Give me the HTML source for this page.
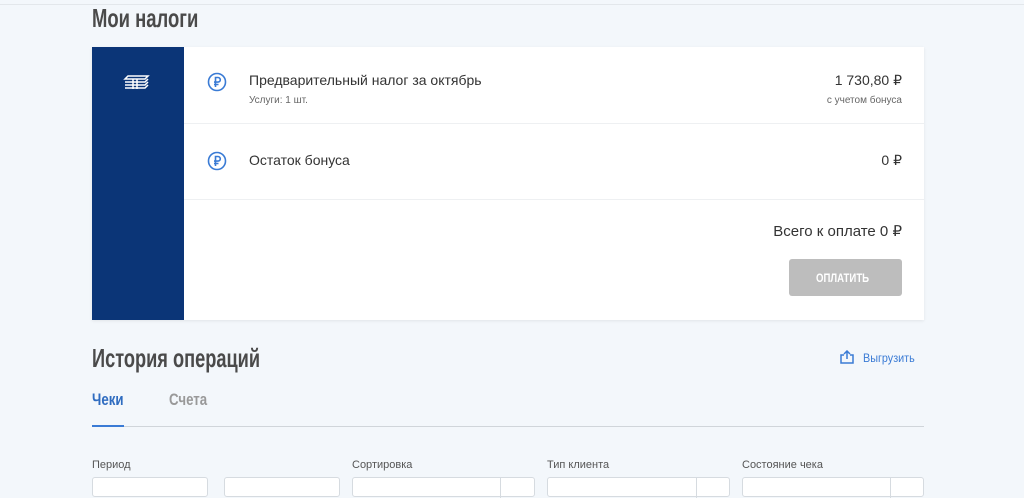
<!DOCTYPE html>
<html><head><meta charset="utf-8"><style>
*{margin:0;padding:0;box-sizing:border-box}
body{width:1024px;height:482px;overflow:hidden;background:#f3f7fb;font-family:"Liberation Sans",sans-serif;color:#333;position:relative}
.a{position:absolute}
.h{font-family:"Liberation Sans",sans-serif;font-weight:bold;color:#4a4a4a;transform-origin:0 0;white-space:nowrap}
.t{font-size:14px;color:#333}
.s{font-size:10px;color:#666}
.lbl{font-size:11px;color:#555}
.inp{position:absolute;top:477px;height:20px;border:1px solid #d6dbe0;border-radius:3px;background:#fff}
</style></head><body>
<div class="a" style="left:0;top:4px;width:1024px;height:1px;background:#e3e7eb"></div>
<div class="a h" style="left:92px;top:3px;font-size:26px;transform:scaleX(.71)">Мои налоги</div>
<div class="a" style="left:92px;top:47px;width:832px;height:273px;background:#fff;box-shadow:0 1px 3px rgba(0,0,0,.08)"></div>
<div class="a" style="left:92px;top:47px;width:92px;height:273px;background:#0b3577"></div>
<svg class="a" style="left:123px;top:73px" width="30" height="20" viewBox="0 0 30 20" fill="none" stroke="#fff" stroke-width="1.5"><path d="M5 3h20l-3 3H2z M2 9h20l3-3 M2 12h20l3-3 M2 15h20l3-3 M10 6v10 M14 6v10"/></svg>
<svg class="a" style="left:207px;top:72px" width="20" height="20" viewBox="0 0 20 20" fill="none" stroke="#3a7bd5" stroke-width="1.6"><circle cx="10" cy="10" r="8.5"/><path d="M8.5 15V5.5h2.5a2.3 2.3 0 010 4.6H7M7 12.5h4.5"/></svg>
<svg class="a" style="left:207px;top:151px" width="20" height="20" viewBox="0 0 20 20" fill="none" stroke="#3a7bd5" stroke-width="1.6"><circle cx="10" cy="10" r="8.5"/><path d="M8.5 15V5.5h2.5a2.3 2.3 0 010 4.6H7M7 12.5h4.5"/></svg>
<div class="a t" style="left:249px;top:72px">Предварительный налог за октябрь</div>
<div class="a s" style="left:249px;top:95px">Услуги: 1 шт.</div>
<div class="a t" style="right:122px;top:72px">1 730,80 ₽</div>
<div class="a s" style="right:122px;top:95px">с учетом бонуса</div>
<div class="a" style="left:184px;top:123px;width:740px;height:1px;background:#eef0f2"></div>
<div class="a t" style="left:249px;top:152px">Остаток бонуса</div>
<div class="a t" style="right:122px;top:152px">0 ₽</div>
<div class="a" style="left:184px;top:199px;width:740px;height:1px;background:#eef0f2"></div>
<div class="a" style="right:122px;top:222px;font-size:15px;color:#333">Всего к оплате 0 ₽</div>
<div class="a" style="left:789px;top:259px;width:113px;height:37px;background:#bdbdbd;border-radius:3px"></div>
<div class="a" style="left:816px;top:271px;color:#fff;font-size:12px;font-weight:bold;transform:scaleX(.8);transform-origin:0 0">ОПЛАТИТЬ</div>
<div class="a h" style="left:92px;top:343px;font-size:26px;transform:scaleX(.7)">История операций</div>
<svg class="a" style="left:840px;top:350px" width="14" height="14" viewBox="0 0 14 14" fill="none" stroke="#3a7bd5" stroke-width="1.5"><path d="M4 5H1v8h12V5h-3M7 9V1M4 4l3-3 3 3"/></svg>
<div class="a" style="left:863px;top:351px;font-size:12px;color:#3a7bd5;transform:scaleX(.9);transform-origin:0 0">Выгрузить</div>
<div class="a h" style="left:92px;top:390px;font-size:17px;color:#2f6cc0;transform:scaleX(.78)">Чеки</div>
<div class="a h" style="left:169px;top:390px;font-size:17px;color:#999;transform:scaleX(.78)">Счета</div>
<div class="a" style="left:92px;top:426px;width:832px;height:1px;background:#d0d5da"></div>
<div class="a" style="left:92px;top:425px;width:32px;height:2px;background:#3a7bd5"></div>
<div class="a lbl" style="left:92px;top:459px">Период</div>
<div class="a lbl" style="left:352px;top:459px">Сортировка</div>
<div class="a lbl" style="left:547px;top:459px">Тип клиента</div>
<div class="a lbl" style="left:742px;top:459px">Состояние чека</div>
<div class="inp" style="left:92px;width:116px"></div>
<div class="inp" style="left:224px;width:116px"></div>
<div class="inp" style="left:352px;width:183px"><div class="a" style="left:147px;top:0;width:1px;height:20px;background:#d6dbe0"></div></div>
<div class="inp" style="left:547px;width:183px"><div class="a" style="left:148px;top:0;width:1px;height:20px;background:#d6dbe0"></div></div>
<div class="inp" style="left:742px;width:182px"><div class="a" style="left:147px;top:0;width:1px;height:20px;background:#d6dbe0"></div></div>
</body></html>
